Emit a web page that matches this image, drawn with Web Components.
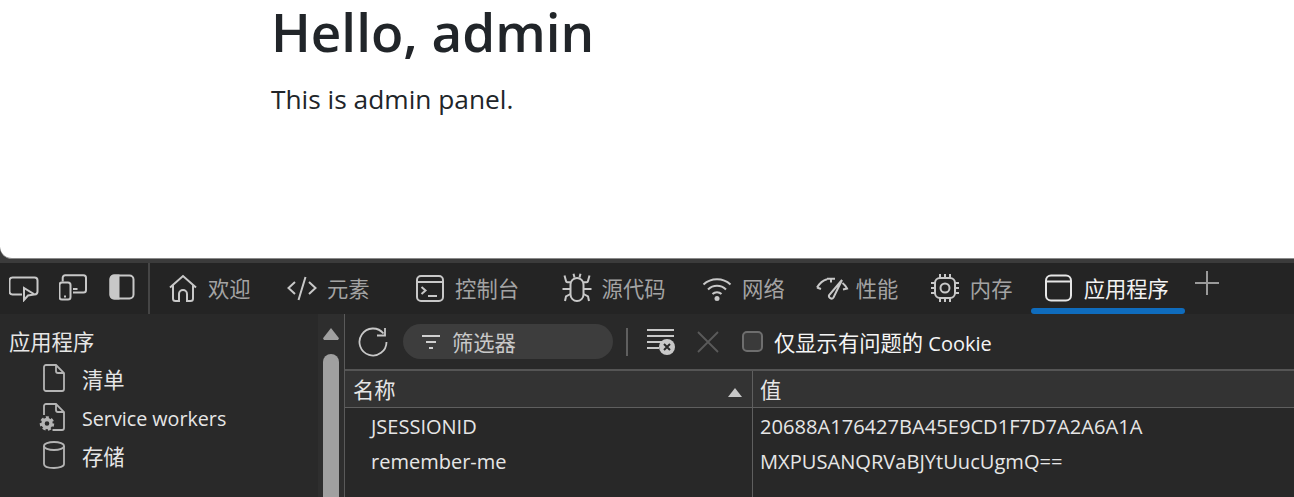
<!DOCTYPE html>
<html lang="zh">
<head>
<meta charset="utf-8">
<title>Admin panel</title>
<style>
  html, body { margin: 0; height: 497px; overflow: hidden; background: #3b3b3b; }
  body { display: flex; flex-direction: column; font-family: "Open Sans", "Noto Sans CJK SC", sans-serif; }
</style>
</head>
<body>
<admin-page>
  <h1 slot="title">Hello, admin</h1>
  <span slot="lead">This is admin panel.</span>
</admin-page>
<dev-tools>
  <tab-bar slot="tabs">
    <dev-tab label="欢迎" icon="home" lead="18"></dev-tab>
    <dev-tab label="元素" icon="code" lead="36.400"></dev-tab>
    <dev-tab label="控制台" icon="console" lead="45.500"></dev-tab>
    <dev-tab label="源代码" icon="bug" lead="42.600"></dev-tab>
    <dev-tab label="网络" icon="wifi" lead="36.600"></dev-tab>
    <dev-tab label="性能" icon="gauge" lead="31"></dev-tab>
    <dev-tab label="内存" icon="chip" lead="31.500"></dev-tab>
    <dev-tab label="应用程序" icon="app" lead="18.700" active></dev-tab>
  </tab-bar>
  <side-tree slot="side">
    <tree-item heading label="应用程序"></tree-item>
    <tree-item label="清单" icon="file"></tree-item>
    <tree-item label="Service workers" icon="gearfile" latin></tree-item>
    <tree-item label="存储" icon="db"></tree-item>
  </side-tree>
  <cookie-panel slot="main">
    <cookie-row name="JSESSIONID" value="20688A176427BA45E9CD1F7D7A2A6A1A"></cookie-row>
    <cookie-row name="remember-me" value="MXPUSANQRVaBJYtUucUgmQ=="></cookie-row>
  </cookie-panel>
</dev-tools>

<script>
const ICONS = {
  home: '<svg width="30" height="30" viewBox="0 0 30 30"><path d="M2 14.500 15 3l13 11.500M5 12v13.500A2.500 2.500 0 0 0 7.500 28H11v-7a4 4 0 0 1 8 0v7h3.500a2.500 2.500 0 0 0 2.500-2.500V12"/></svg>',
  code: '<svg width="30" height="30" viewBox="0 0 30 30"><path d="M8 9 1.500 15 8 21M22 9l6.500 6L22 21M18.500 4l-7 23"/></svg>',
  console: '<svg width="30" height="30" viewBox="0 0 30 30"><rect x="2" y="3" width="26" height="25" rx="4"/><path d="M2 9h26M6.500 14l4 3.500-4 3.500M13 23h9"/></svg>',
  bug: '<svg width="30" height="30" viewBox="0 0 30 30"><rect x="8.500" y="5" width="13" height="23" rx="6.500"/><path d="M11.500.8l1 3.700M18.500.8l-1 3.700M2.500 2.500 4 8a1.500 1.500 0 0 0 1.500 1.200h3M27.500 2.500 26 8a1.500 1.500 0 0 1-1.500 1.200h-3M.5 16h8M29.500 16h-8M3 28l1-4.500L8.500 21M27 28l-1-4.500L21.500 21"/></svg>',
  wifi: '<svg width="30" height="30" viewBox="0 0 30 30"><path d="M1.500 11.500C9 4.500 21 4.500 28.500 11.500M6 16.500c5-5 13-5 18 0M10.500 21c2.500-2.500 6.500-2.500 9 0"/><circle cx="15" cy="25.500" r="2.500" fill="#c8c8c8" stroke="none"/></svg>',
  gauge: '<svg width="30" height="30" viewBox="0 0 30 30" style="overflow:visible"><path d="M1 14.500C3.500 10.500 7 7.500 11 6.300M1 14.500l4 1.500M11 5.800h8M15 5.800v3.700M26 7 17.500 24.500a2.500 2.500 0 0 1-4.300-2.500ZM26.500 10c2 1.500 3.500 3.500 4.500 5.500l-4 1"/></svg>',
  chip: '<svg width="30" height="30" viewBox="0 0 30 30"><rect x="5" y="5" width="20" height="20" rx="5"/><circle cx="15" cy="15" r="4.500"/><path d="M10 1v4M15 1v4M20 1v4M10 25v4M15 25v4M20 25v4M1 10h4M1 15h4M1 20h4M25 10h4M25 15h4M25 20h4"/></svg>',
  app: '<svg width="30" height="30" viewBox="0 0 30 30"><rect x="2" y="2.500" width="25" height="25" rx="5"/><path d="M2 8.500h25"/></svg>',
  file: '<svg width="30" height="30" viewBox="0 0 30 30"><path d="M10 2h10l8 8v16a2 2 0 0 1-2 2H10a2 2 0 0 1-2-2V4a2 2 0 0 1 2-2ZM20 2v6a2 2 0 0 0 2 2h6"/></svg>',
  gearfile: '<svg width="30" height="30" viewBox="0 0 30 30"><path d="M8 13V4a2 2 0 0 1 2-2h10l8 8v16a2 2 0 0 1-2 2h-9.500M20 2v6a2 2 0 0 0 2 2h6"/><circle cx="11" cy="21.500" r="4" fill="none" stroke="#b4b4b4" stroke-width="3.400"/><circle cx="11" cy="21.500" r="6" fill="none" stroke="#b4b4b4" stroke-width="2.500" stroke-dasharray="3 2.280"/></svg>',
  db: '<svg width="30" height="30" viewBox="0 0 30 30"><ellipse cx="18" cy="6" rx="10" ry="4"/><path d="M8 6v18c0 2.500 4.500 4 10 4s10-1.500 10-4V6"/></svg>'
};

class AdminPage extends HTMLElement {
  constructor() {
    super();
    this.attachShadow({ mode: 'open' });
    this.shadowRoot.innerHTML = `
      <style>
        :host {
          display: block;
          height: 259px;
          flex: none;
          box-sizing: border-box;
          background: #fff;
          border-bottom-left-radius: 12px;
          border-bottom: 1px solid #8a8a8a;
          padding-left: 271px;
          color: #212529;
        }
        ::slotted(h1) {
          margin: 0;
          font: 600 53px/64px "Open Sans", sans-serif;
          color: #212529;
        }
        .lead { padding-top: 18px; font-size: 26.300px; line-height: 35px; }
      </style>
      <slot name="title"></slot>
      <div class="lead"><slot name="lead"></slot></div>
    `;
  }
}

class DevTools extends HTMLElement {
  constructor() {
    super();
    this.attachShadow({ mode: 'open' });
    this.shadowRoot.innerHTML = `
      <style>
        :host {
          display: grid;
          grid-template-columns: 344px 1fr;
          grid-template-rows: 51px 1fr;
          flex: 1;
          min-height: 0;
          margin-top: 4px;
          background: #292929;
          color: #e6e6e6;
        }
        .tabs { grid-column: 1 / 3; }
        .main { border-left: 1px solid #5a5a5a; min-width: 0; overflow: hidden; }
        .side { overflow: hidden; }
      </style>
      <div class="tabs"><slot name="tabs"></slot></div>
      <div class="side"><slot name="side"></slot></div>
      <div class="main"><slot name="main"></slot></div>
    `;
  }
}

class TabBar extends HTMLElement {
  constructor() {
    super();
    this.attachShadow({ mode: 'open' });
    this.shadowRoot.innerHTML = `
      <style>
        :host { display: flex; height: 51px; background: #242424; align-items: stretch; }
        svg { fill: none; stroke: #c8c8c8; stroke-width: 2; display: block; }
        .tools { display: flex; align-items: center; gap: 20px; padding: 0 0 4px 9px; width: 150px; box-sizing: border-box; border-right: 2px solid #454545; }
        .plus { margin: 7px 0 0 9px; }
        .plus svg { stroke: #9a9a9a; }
      </style>
      <div class="tools">
        <svg width="30" height="30" viewBox="0 0 30 30"><path d="M13 22.500H3.500a3 3 0 0 1-3-3V8.500a3 3 0 0 1 3-3h22a3 3 0 0 1 3 3v11a3 3 0 0 1-2.500 3M15 16v12l4-4.500 6.500-1Z"/></svg>
        <svg width="30" height="30" viewBox="0 0 30 30"><path d="M3.700 9.500V5.700a2.500 2.500 0 0 1 2.500-2.500h18.300a2.500 2.500 0 0 1 2.500 2.500V18a2.500 2.500 0 0 1-2.500 2.500H14M14 17h4.500"/><rect x=".5" y="10.500" width="11" height="17" rx="2.500"/><path d="M5 24.500h2"/></svg>
        <svg width="26" height="26" viewBox="0 0 26 26"><rect x="1.500" y="1.500" width="23" height="23" rx="4"/><path d="M5 1.500h4.500v23H5a3.500 3.500 0 0 1-3.500-3.500V5A3.500 3.500 0 0 1 5 1.500Z" fill="#c8c8c8"/></svg>
      </div>
      <slot></slot>
      <div class="plus"><svg width="26" height="26" viewBox="0 0 26 26"><path d="M13 1v24M1 13h24"/></svg></div>
    `;
  }
}

class DevTab extends HTMLElement {
  constructor() {
    super();
    this.attachShadow({ mode: 'open' });
    const active = this.hasAttribute('active');
    const lead = this.getAttribute('lead') || 30;
    this.shadowRoot.innerHTML = `
      <style>
        :host {
          display: flex;
          align-items: center;
          gap: 10px;
          margin-left: ${lead}px;
          padding: 0 ${active ? 16.300 : 0}px 0 ${active ? 12.500 : 0}px;
          height: 51px;
          position: relative;
          font-size: 21.300px;
          color: ${active ? '#f2f2f2' : '#a3a3a3'};
        }
        svg { fill: none; stroke: ${active ? '#e6e6e6' : '#c8c8c8'}; stroke-width: 2; display: block; }
        .icon { margin-bottom: 2px; height: 30px; }
        .label { padding-bottom: 2px; }
        .bar { position: absolute; left: 0; right: 0; bottom: 0; height: 6px; border-radius: 3px; background: #0f6cbd; display: ${active ? 'block' : 'none'}; }
      </style>
      <span class="icon">${ICONS[this.getAttribute('icon')]}</span>
      <span class="label">${this.getAttribute('label')}</span>
      <span class="bar"></span>
    `;
  }
}

class SideTree extends HTMLElement {
  constructor() {
    super();
    this.attachShadow({ mode: 'open' });
    this.shadowRoot.innerHTML = `
      <style>
        :host { display: flex; height: 183px; background: #292929; }
        .list { flex: 1; padding-top: 7px; }
        .track { width: 26px; background: #2e2e2e; display: flex; flex-direction: column; align-items: center; padding-top: 14px; box-sizing: border-box; }
        .up { width: 16px; height: 12px; background: #a0a0a0; clip-path: polygon(50% 0, 100% 85%, 94% 100%, 6% 100%, 0 85%); }
        .thumb { width: 16px; flex: 1; margin-top: 14px; background: #a0a0a0; border-radius: 8px 8px 0 0; }
      </style>
      <div class="list"><slot></slot></div>
      <div class="track"><div class="up"></div><div class="thumb"></div></div>
    `;
  }
}

class TreeItem extends HTMLElement {
  constructor() {
    super();
    this.attachShadow({ mode: 'open' });
    const heading = this.hasAttribute('heading');
    const icon = this.getAttribute('icon');
    this.shadowRoot.innerHTML = `
      <style>
        :host {
          display: flex;
          align-items: center;
          height: 38.500px;
          box-sizing: border-box;
          padding-left: ${heading ? 9 : 36}px;
          font-size: 21.300px;
          color: #e6e6e6;
        }
        :host([latin]) { font-size: 19.700px; }
        :host([latin]) .label { padding-top: 4px; }
        :host([heading]) { height: 38px; }
        svg { fill: none; stroke: #b4b4b4; stroke-width: 1.800; display: block; }
        .icon { width: 30px; margin-right: 16px; display: flex; justify-content: flex-end; }
      </style>
      ${icon ? `<span class="icon">${ICONS[icon]}</span>` : ''}
      <span class="label">${this.getAttribute('label')}</span>
    `;
  }
}

class CookiePanel extends HTMLElement {
  constructor() {
    super();
    this.attachShadow({ mode: 'open' });
    this.shadowRoot.innerHTML = `
      <style>
        :host { display: flex; flex-direction: column; height: 183px; background: #282828; font-size: 21.300px; }
        svg { display: block; fill: none; }
        .bar { display: flex; align-items: center; height: 57px; flex: none; box-sizing: border-box; border-bottom: 2px solid #555; background: #292929; }
        .reload { margin-left: 13px; stroke: #c8c8c8; stroke-width: 1.800; }
        .filter { margin-left: 15px; width: 210px; height: 35px; border-radius: 18px; background: #3d3d3d; display: flex; align-items: center; color: #c8c8c8; box-sizing: border-box; padding-left: 18px; gap: 11px; }
        .filter svg { stroke: #d0d0d0; stroke-width: 2; }
        .sep { width: 2px; height: 28px; background: #5f5f5f; margin-left: 13px; }
        .clear { margin-left: 17px; }
        .x { margin-left: 19px; stroke: #5a5a5a; stroke-width: 1.800; }
        .check { margin-left: 22px; width: 21px; height: 21px; box-sizing: border-box; border: 2px solid #6e6e6e; border-radius: 5px; background: #3a3a3a; }
        .only { margin-left: 11px; color: #f5f5f5; font-size: 20px; }
        .only b { font-weight: 400; font-size: 21.300px; }
        .head { display: grid; grid-template-columns: 407px 1fr; height: 37px; flex: none; box-sizing: border-box; border-bottom: 1px solid #5f5f5f; background: #333; color: #e6e6e6; }
        .head div { display: flex; align-items: center; justify-content: space-between; padding: 0 10px 2px 8px; }
        .head div + div { border-left: 1px solid #5f5f5f; padding-left: 7px; }
        .tri { width: 0; height: 0; border: 7px solid transparent; border-top: 0; border-bottom: 9px solid #c8c8c8; margin-top: 8px; }
        .rows { flex: 1; display: block; padding-top: 1px; background: linear-gradient(#5f5f5f, #5f5f5f) 407px 0 / 1px 100% no-repeat; }
      </style>
      <div class="bar">
        <svg class="reload" width="30" height="30" viewBox="0 0 30 30"><path d="M25.500 6.500A13.500 13.500 0 1 0 28.500 15M27 1v7.500h-8"/></svg>
        <div class="filter">
          <svg width="20" height="16" viewBox="0 0 20 16"><path d="M1 2h18M5 8h10M8 14h4"/></svg>
          <span>筛选器</span>
        </div>
        <div class="sep"></div>
        <svg class="clear" width="32" height="28" viewBox="0 0 32 28">
          <path d="M2 2h27M2 8h27M2 14h19M2 20h12" stroke="#c8c8c8" stroke-width="1.800"/>
          <circle cx="22" cy="19" r="8" fill="#c8c8c8"/>
          <path d="M19 16l6 6M25 16l-6 6" stroke="#292929" stroke-width="2"/>
        </svg>
        <svg class="x" width="24" height="24" viewBox="0 0 24 24"><path d="M2 2l20 20M22 2 2 22"/></svg>
        <div class="check"></div>
        <span class="only"><b>仅显示有问题的</b> Cookie</span>
      </div>
      <div class="head">
        <div><span>名称</span><span class="tri"></span></div>
        <div><span>值</span></div>
      </div>
      <div class="rows"><slot></slot></div>
    `;
  }
}

class CookieRow extends HTMLElement {
  constructor() {
    super();
    this.attachShadow({ mode: 'open' });
    this.shadowRoot.innerHTML = `
      <style>
        :host { display: grid; grid-template-columns: 407px 1fr; height: 35px; align-items: center; color: #e6e6e6; font-size: 20px; }
        .name { padding-left: 26px; }
        .value { padding-left: 8px; font-size: 20.100px; }
      </style>
      <span class="name">${this.getAttribute('name')}</span>
      <span class="value">${this.getAttribute('value')}</span>
    `;
  }
}

customElements.define('admin-page', AdminPage);
customElements.define('dev-tools', DevTools);
customElements.define('tab-bar', TabBar);
customElements.define('dev-tab', DevTab);
customElements.define('side-tree', SideTree);
customElements.define('tree-item', TreeItem);
customElements.define('cookie-panel', CookiePanel);
customElements.define('cookie-row', CookieRow);
</script>
</body>
</html>
